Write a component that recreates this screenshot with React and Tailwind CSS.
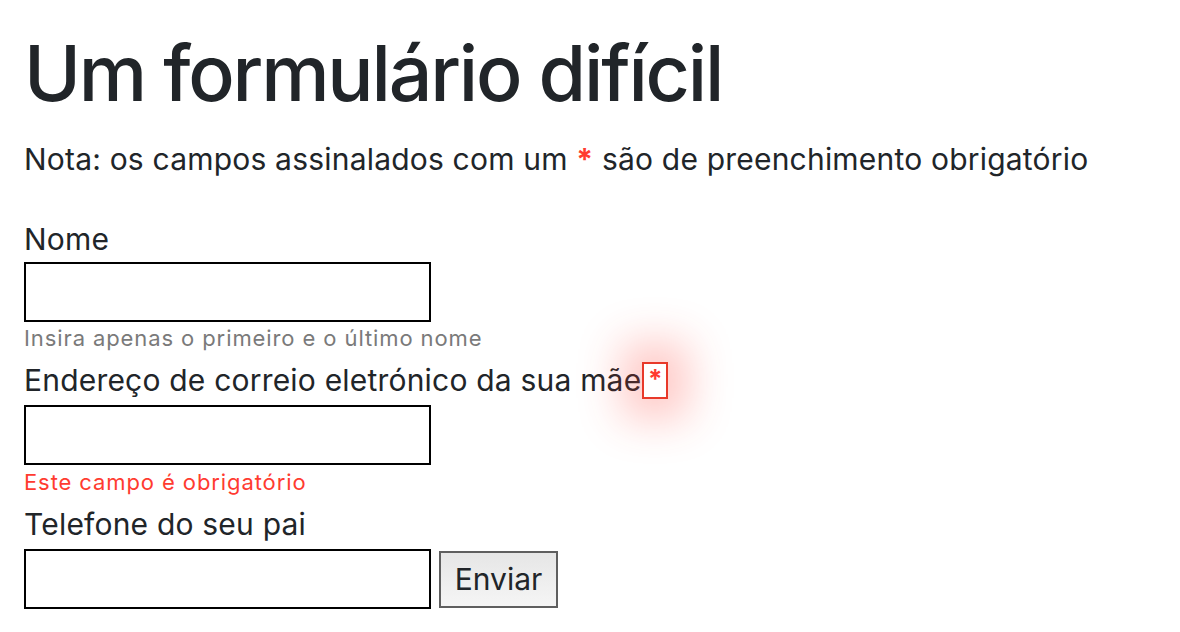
import React from 'react';

const font = { fontFamily: 'Inter, "Liberation Sans", sans-serif' };

const Field = ({ label, required, children, hint, error, labelGap = 'mb-[7px]' }) => (
  <div className="flex flex-col">
    <label className={`text-[30px] leading-[36px] tracking-[0.2px] text-[#212529] flex items-start h-[36px] ${labelGap}`}>
      <span>{label}</span>
      {required && (
        <span className="relative ml-[1px] w-[26px] h-[37px] border-2 border-[#e8392a] text-[#ff3b30] font-bold text-[26px] leading-[30px] text-center shadow-[0_0_44px_20px_rgba(255,59,48,0.28)] bg-white">
          *
        </span>
      )}
    </label>
    {children}
    {hint && <div className="text-[22px] leading-[28px] tracking-[0.9px] text-[#7a7a7a] mt-[2px]">{hint}</div>}
    {error && <div className="text-[22px] leading-[28px] tracking-[0.9px] text-[#ff3b30] mt-[3px]">{error}</div>}
  </div>
);

const Input = () => (
  <input className="w-[407px] h-[60px] border-2 border-black bg-white outline-none" />
);

export default function App() {
  return (
    <div className="min-h-screen bg-white px-[24px] pt-[26px]" style={font}>
      <h1 className="text-[77px] leading-[94px] font-medium text-[#212529] tracking-[-2.2px]">Um formulário difícil</h1>
      <p className="text-[30px] leading-[36px] tracking-[0.2px] text-[#212529] mt-[21px] mb-[44px]">
        Nota: os campos assinalados com um <span className="text-[#ff3b30] font-bold">*</span> são de preenchimento obrigatório
      </p>
      <form className="flex flex-col gap-[10px]" onSubmit={(e) => e.preventDefault()}>
        <Field label="Nome" hint="Insira apenas o primeiro e o último nome" labelGap="mb-[5px]">
          <Input />
        </Field>
        <Field label="Endereço de correio eletrónico da sua mãe" required error="Este campo é obrigatório">
          <Input />
        </Field>
        <Field label="Telefone do seu pai">
          <div className="flex items-start gap-[8px]">
            <Input />
            <button type="submit" className="mt-[2px] h-[57px] w-[119px] border-2 border-[#5f5f5f] bg-gradient-to-b from-[#e6e6e6] to-[#f5f5f5] text-[30px] text-[#212529]">
              Enviar
            </button>
          </div>
        </Field>
      </form>
    </div>
  );
}
